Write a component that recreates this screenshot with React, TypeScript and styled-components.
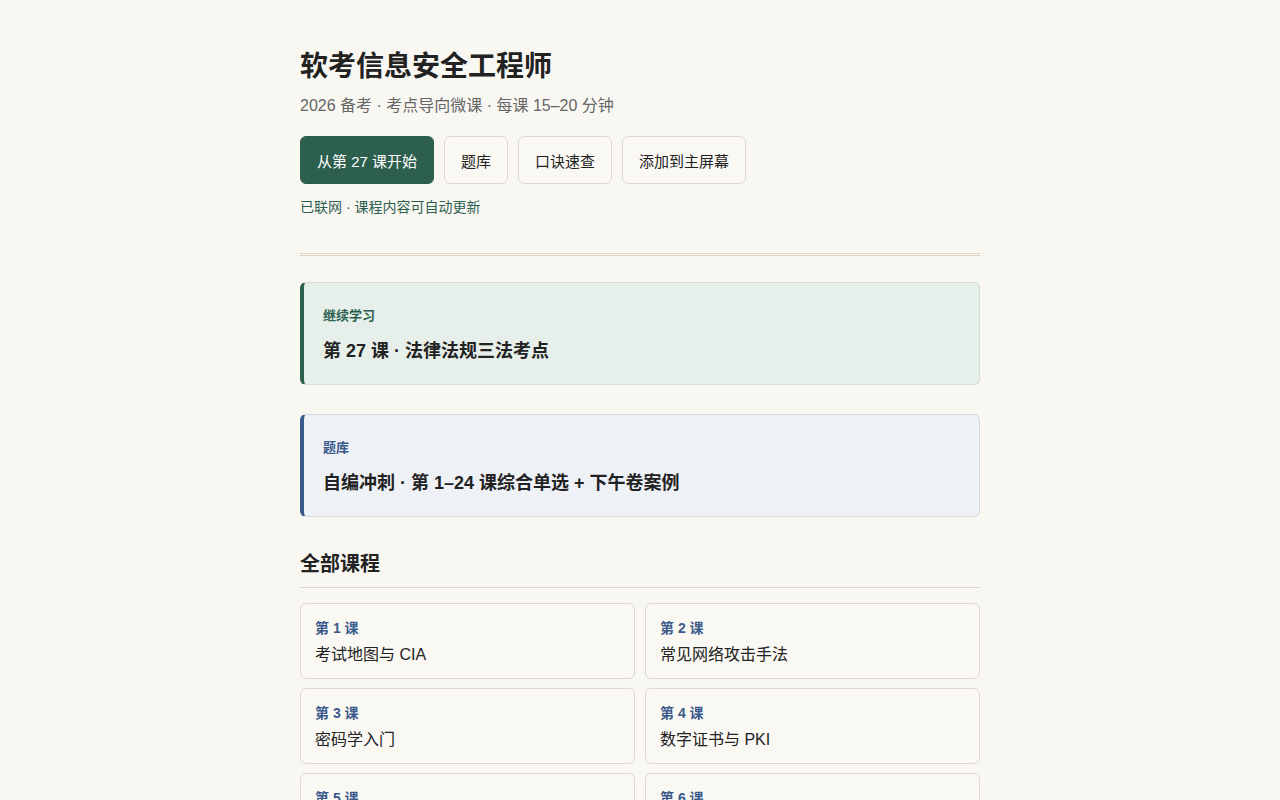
import React from "react";
import styled, { createGlobalStyle } from "styled-components";

const GlobalStyle = createGlobalStyle`
  html, body {
    margin: 0;
    padding: 0;
    background: #f9f7f2;
  }
  body {
    font-family: "Liberation Sans", Arial, "Noto Sans CJK SC", sans-serif;
    color: #222;
  }
  * {
    box-sizing: border-box;
  }
`;

const lessons = [
  "考试地图与 CIA",
  "常见网络攻击手法",
  "密码学入门",
  "数字证书与 PKI",
  "对称与非对称加密",
  "哈希与消息认证",
  "身份认证技术",
  "访问控制模型",
  "防火墙技术",
  "入侵检测与防御",
  "VPN 与隧道协议",
  "无线网络安全",
  "操作系统安全",
  "数据库安全",
  "Web 应用安全",
  "恶意代码防范",
  "安全审计与日志",
  "物理与环境安全",
  "云计算安全",
  "移动应用安全",
  "工控系统安全",
  "风险评估方法",
  "等级保护 2.0",
  "应急响应与灾备",
  "安全管理体系",
  "信息安全标准",
  "法律法规三法考点",
  "下午卷案例精讲",
  "考前冲刺总复习",
  "模拟题讲评",
];

const App: React.FC = () => (
  <>
    <GlobalStyle />
    <Page>
      <Header>
        <Title>软考信息安全工程师</Title>
        <Subtitle>2026 备考 · 考点导向微课 · 每课 15–20 分钟</Subtitle>
        <Actions>
          <ActionButton primary>从第 27 课开始</ActionButton>
          <ActionButton>题库</ActionButton>
          <ActionButton>口诀速查</ActionButton>
          <ActionButton>添加到主屏幕</ActionButton>
        </Actions>
        <Status>已联网 · 课程内容可自动更新</Status>
      </Header>

      <Divider />

      <Callout tone="green">
        <CalloutLabel tone="green">继续学习</CalloutLabel>
        <CalloutTitle>第 27 课 · 法律法规三法考点</CalloutTitle>
      </Callout>

      <Callout tone="blue">
        <CalloutLabel tone="blue">题库</CalloutLabel>
        <CalloutTitle>自编冲刺 · 第 1–24 课综合单选 + 下午卷案例</CalloutTitle>
      </Callout>

      <SectionTitle>全部课程</SectionTitle>
      <LessonGrid>
        {lessons.map((name, i) => (
          <LessonCard key={i}>
            <LessonNo>第 {i + 1} 课</LessonNo>
            <LessonName>{name}</LessonName>
          </LessonCard>
        ))}
      </LessonGrid>
    </Page>
  </>
);

const Page = styled.main`
  width: 680px;
  margin: 0 auto;
  padding: 47px 0 40px;
`;

const Header = styled.header`
  display: flex;
  flex-direction: column;
  align-items: flex-start;
`;

const Title = styled.h1`
  margin: 0;
  font-size: 28px;
  line-height: 40px;
  font-weight: 700;
  color: #222;
`;

const Subtitle = styled.p`
  margin: 8px 0 0;
  font-size: 16px;
  line-height: 22px;
  color: #666;
`;

const Actions = styled.div`
  display: flex;
  gap: 10px;
  margin-top: 19px;
`;

const ActionButton = styled.button<{ primary?: boolean }>`
  height: 48px;
  padding: 0 16px;
  border-radius: 6px;
  border: 1px solid ${(p) => (p.primary ? "#2d5f4f" : "#ddd8cc")};
  background: ${(p) => (p.primary ? "#2d5f4f" : "#faf8f3")};
  color: ${(p) => (p.primary ? "#fff" : "#222")};
  font-family: inherit;
  font-size: 15px;
  cursor: pointer;
`;

const Status = styled.p`
  margin: 13px 0 0;
  font-size: 14px;
  line-height: 20px;
  color: #2d5f4f;
`;

const Divider = styled.hr`
  margin: 36px 0 26px;
  border: none;
  border-top: 3px double #e3d3c0;
  height: 0;
`;

const toneMap = {
  green: { bar: "#2d5f4f", bg: "#e6efe9", border: "#d3ddd6", label: "#2d5f4f" },
  blue: { bar: "#3a5a8c", bg: "#eef1f6", border: "#d5d9e0", label: "#3a5a8c" },
};

type Tone = keyof typeof toneMap;

const Callout = styled.section<{ tone: Tone }>`
  background: ${(p) => toneMap[p.tone].bg};
  border: 1px solid ${(p) => toneMap[p.tone].border};
  border-left: 4px solid ${(p) => toneMap[p.tone].bar};
  border-radius: 6px;
  padding: 24px 19px 21px;
  margin-bottom: 29px;
`;

const CalloutLabel = styled.div<{ tone: Tone }>`
  font-size: 13px;
  line-height: 18px;
  font-weight: 700;
  color: ${(p) => toneMap[p.tone].label};
`;

const CalloutTitle = styled.div`
  margin-top: 14px;
  font-size: 18px;
  line-height: 24px;
  font-weight: 700;
  color: #222;
`;

const SectionTitle = styled.h2`
  margin: 33px 0 15px;
  padding-bottom: 9px;
  font-size: 20px;
  line-height: 28px;
  font-weight: 700;
  border-bottom: 1px solid #ddd8cc;
`;

const LessonGrid = styled.div`
  display: grid;
  grid-template-columns: 1fr 1fr;
  gap: 9px 10px;
`;

const LessonCard = styled.div`
  height: 76px;
  padding: 15px 14px;
  border: 1px solid #ddd8cc;
  border-radius: 6px;
  background: #faf8f3;
`;

const LessonNo = styled.div`
  font-size: 14px;
  line-height: 18px;
  font-weight: 700;
  color: #3a5a8c;
`;

const LessonName = styled.div`
  margin-top: 7px;
  font-size: 16px;
  line-height: 22px;
  color: #222;
`;

export default App;
